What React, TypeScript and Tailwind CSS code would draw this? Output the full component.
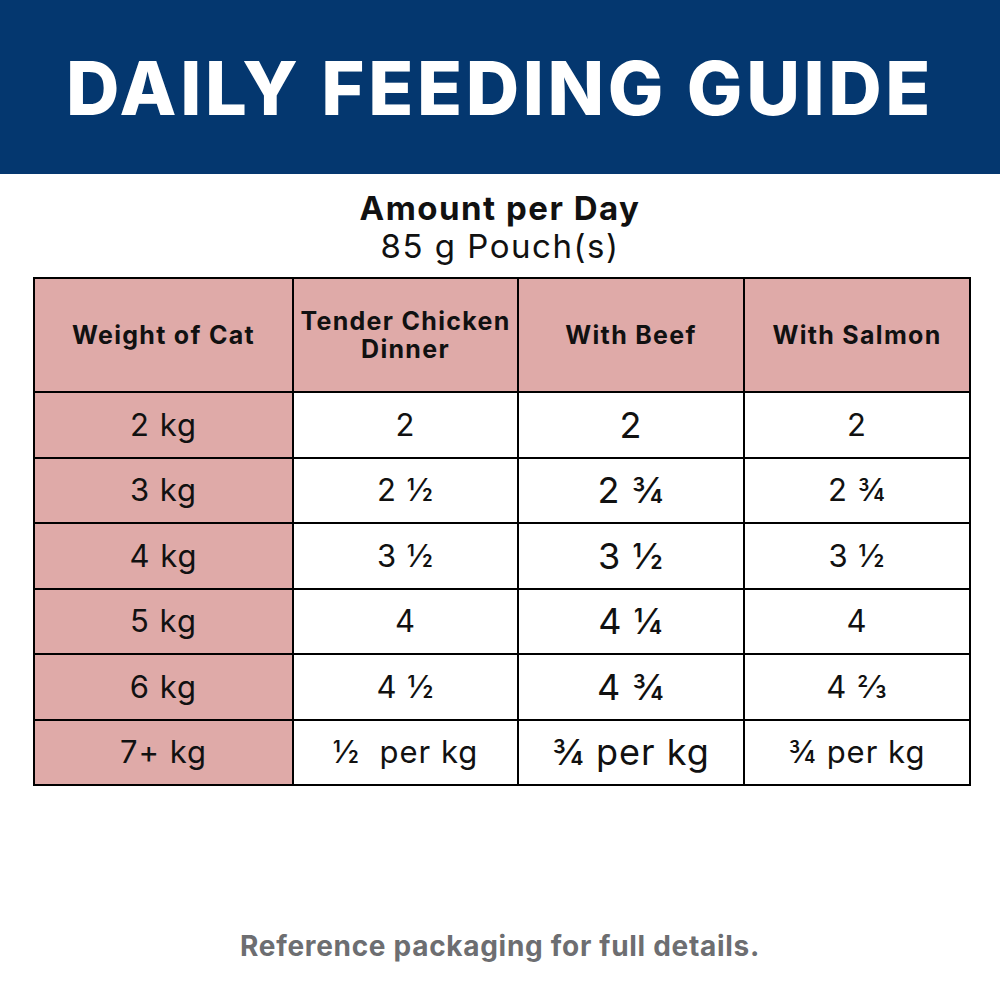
const rows: { weight: string; chicken: string; beef: string; salmon: string }[] = [
  { weight: "2 kg", chicken: "2", beef: "2", salmon: "2" },
  { weight: "3 kg", chicken: "2 ½", beef: "2 ¾", salmon: "2 ¾" },
  { weight: "4 kg", chicken: "3 ½", beef: "3 ½", salmon: "3 ½" },
  { weight: "5 kg", chicken: "4", beef: "4 ¼", salmon: "4" },
  { weight: "6 kg", chicken: "4 ½", beef: "4 ¾", salmon: "4 ⅔" },
  { weight: "7+ kg", chicken: "½  per kg", beef: "¾ per kg", salmon: "¾ per kg" },
];

export default function App() {
  return (
    <div className="w-[1000px] h-[1000px] bg-white flex flex-col font-['Inter',sans-serif] text-[#111]">
      <div className="h-[174px] bg-[#04376f] flex items-center justify-center">
        <h1 className="text-white font-extrabold text-[74px] tracking-[3.6px] leading-none pt-[2px]">
          DAILY FEEDING GUIDE
        </h1>
      </div>

      <div className="mt-[15px] flex flex-col items-center leading-[38px] tracking-[1.5px]">
        <p className="font-bold text-[33px]">Amount per Day</p>
        <p className="text-[33px]">85 g Pouch(s)</p>
      </div>

      <table className="ml-[33px] mt-[12px] w-[936px] border-collapse border-2 border-black table-fixed">
        <colgroup>
          <col className="w-[259px]" />
          <col className="w-[225px]" />
          <col className="w-[226px]" />
          <col className="w-[226px]" />
        </colgroup>
        <thead>
          <tr className="h-[114px] bg-[#dfaaa8] text-[25px] font-bold leading-[28px] tracking-[1.3px]">
            <th className="border-2 border-black">Weight of Cat</th>
            <th className="border-2 border-black">
              Tender Chicken
              <br />
              Dinner
            </th>
            <th className="border-2 border-black">With Beef</th>
            <th className="border-2 border-black">With Salmon</th>
          </tr>
        </thead>
        <tbody>
          {rows.map((r) => (
            <tr key={r.weight} className="h-[65.5px] text-center tracking-[1px]">
              <td className="border-2 border-black bg-[#dfaaa8] text-[31px]">{r.weight}</td>
              <td className="border-2 border-black text-[31px] whitespace-pre">{r.chicken}</td>
              <td className="border-2 border-black text-[36px]">{r.beef}</td>
              <td className="border-2 border-black text-[31px]">{r.salmon}</td>
            </tr>
          ))}
        </tbody>
      </table>

      <p className="mt-auto mb-[33px] text-center font-bold text-[28px] tracking-[0.7px] text-[#6d6e71]">
        Reference packaging for full details.
      </p>
    </div>
  );
}
